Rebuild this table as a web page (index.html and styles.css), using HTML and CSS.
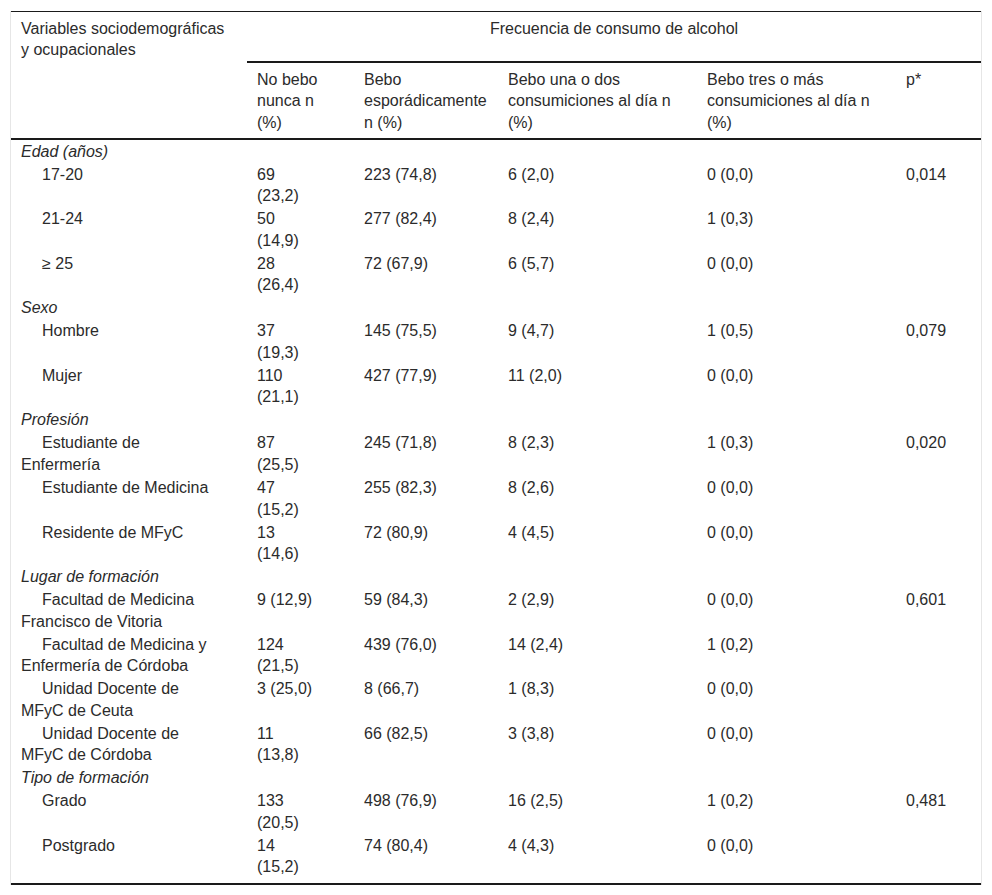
FILE: index.html
```html
<!DOCTYPE html>
<html lang="es">
<head>
<meta charset="utf-8">
<title>Frecuencia de consumo de alcohol</title>
<link rel="stylesheet" href="styles.css">
</head>
<body>
<div class="table-wrap">
<table class="data-table">
  <colgroup>
    <col class="c1"><col class="c2"><col class="c3"><col class="c4"><col class="c5"><col class="c6">
  </colgroup>
  <thead>
    <tr class="head-top">
      <th class="col-var head-var">Variables sociodemográficas y ocupacionales</th>
      <th class="group" colspan="5">Frecuencia de consumo de alcohol</th>
    </tr>
    <tr class="head-sub">
      <th class="col-var"></th>
      <th class="col-n">No bebo nunca n (%)</th>
      <th>Bebo esporádicamente n (%)</th>
      <th>Bebo una o dos consumiciones al día n (%)</th>
      <th>Bebo tres o más consumiciones al día n (%)</th>
      <th>p*</th>
    </tr>
  </thead>
  <tbody>
    <tr class="section"><td class="col-var"><em>Edad (años)</em></td><td class="col-n"></td><td></td><td></td><td></td><td></td></tr>
    <tr><td class="col-var sub">17-20</td><td class="col-n">69 (23,2)</td><td>223 (74,8)</td><td>6 (2,0)</td><td>0 (0,0)</td><td>0,014</td></tr>
    <tr><td class="col-var sub">21-24</td><td class="col-n">50 (14,9)</td><td>277 (82,4)</td><td>8 (2,4)</td><td>1 (0,3)</td><td></td></tr>
    <tr><td class="col-var sub">≥ 25</td><td class="col-n">28 (26,4)</td><td>72 (67,9)</td><td>6 (5,7)</td><td>0 (0,0)</td><td></td></tr>
    <tr class="section"><td class="col-var"><em>Sexo</em></td><td class="col-n"></td><td></td><td></td><td></td><td></td></tr>
    <tr><td class="col-var sub">Hombre</td><td class="col-n">37 (19,3)</td><td>145 (75,5)</td><td>9 (4,7)</td><td>1 (0,5)</td><td>0,079</td></tr>
    <tr><td class="col-var sub">Mujer</td><td class="col-n">110 (21,1)</td><td>427 (77,9)</td><td>11 (2,0)</td><td>0 (0,0)</td><td></td></tr>
    <tr class="section"><td class="col-var"><em>Profesión</em></td><td class="col-n"></td><td></td><td></td><td></td><td></td></tr>
    <tr><td class="col-var sub">Estudiante de Enfermería</td><td class="col-n">87 (25,5)</td><td>245 (71,8)</td><td>8 (2,3)</td><td>1 (0,3)</td><td>0,020</td></tr>
    <tr><td class="col-var sub">Estudiante de Medicina</td><td class="col-n">47 (15,2)</td><td>255 (82,3)</td><td>8 (2,6)</td><td>0 (0,0)</td><td></td></tr>
    <tr><td class="col-var sub">Residente de MFyC</td><td class="col-n">13 (14,6)</td><td>72 (80,9)</td><td>4 (4,5)</td><td>0 (0,0)</td><td></td></tr>
    <tr class="section"><td class="col-var"><em>Lugar de formación</em></td><td class="col-n"></td><td></td><td></td><td></td><td></td></tr>
    <tr><td class="col-var sub">Facultad de Medicina Francisco de Vitoria</td><td class="col-n">9 (12,9)</td><td>59 (84,3)</td><td>2 (2,9)</td><td>0 (0,0)</td><td>0,601</td></tr>
    <tr><td class="col-var sub">Facultad de Medicina y Enfermería de Córdoba</td><td class="col-n">124 (21,5)</td><td>439 (76,0)</td><td>14 (2,4)</td><td>1 (0,2)</td><td></td></tr>
    <tr><td class="col-var sub">Unidad Docente de MFyC de Ceuta</td><td class="col-n">3 (25,0)</td><td>8 (66,7)</td><td>1 (8,3)</td><td>0 (0,0)</td><td></td></tr>
    <tr><td class="col-var sub">Unidad Docente de MFyC de Córdoba</td><td class="col-n">11 (13,8)</td><td>66 (82,5)</td><td>3 (3,8)</td><td>0 (0,0)</td><td></td></tr>
    <tr class="section"><td class="col-var"><em>Tipo de formación</em></td><td class="col-n"></td><td></td><td></td><td></td><td></td></tr>
    <tr><td class="col-var sub">Grado</td><td class="col-n">133 (20,5)</td><td>498 (76,9)</td><td>16 (2,5)</td><td>1 (0,2)</td><td>0,481</td></tr>
    <tr class="last"><td class="col-var sub">Postgrado</td><td class="col-n">14 (15,2)</td><td>74 (80,4)</td><td>4 (4,3)</td><td>0 (0,0)</td><td></td></tr>
  </tbody>
</table>
</div>
</body>
</html>
```

FILE: styles.css
```css
html, body {
  margin: 0;
  background: #ffffff;
}

body {
  padding: 11px 10px;
  font-family: "Liberation Sans", Arial, sans-serif;
  font-size: 16px;
  line-height: 21.6px;
  color: #2b2b2b;
}

.table-wrap {
  border-left: 1px solid #e6e6e6;
  border-right: 1px solid #e6e6e6;
}

.data-table {
  width: 100%;
  table-layout: fixed;
  border-collapse: collapse;
  border-top: 1px solid #1a1a1a;
  border-bottom: 2px solid #1a1a1a;
}

.c1 { width: 236px; }
.c2 { width: 107px; }
.c3 { width: 144px; }
.c4 { width: 199px; }
.c5 { width: 199px; }
.c6 { width: 85px; }

.data-table th,
.data-table td {
  text-align: left;
  vertical-align: top;
  font-weight: normal;
  padding: 0.7px 10px 0.7px 10px;
}

.head-top th {
  padding-top: 5.5px;
  padding-bottom: 1.5px;
}

.head-sub th {
  padding-top: 5.5px;
  padding-bottom: 4.5px;
  border-bottom: 2px solid #1a1a1a;
}

.data-table .col-var {
  padding-right: 35px;
}

.data-table .head-var {
  padding-right: 12px;
}

.data-table .col-n {
  padding-right: 35px;
}

.head-top .group {
  text-align: center;
  border-bottom: 2px solid #1a1a1a;
}

.data-table em {
  font-style: italic;
}

.data-table .sub {
  text-indent: 21px;
}

.last td {
  padding-bottom: 4.5px;
}
```
